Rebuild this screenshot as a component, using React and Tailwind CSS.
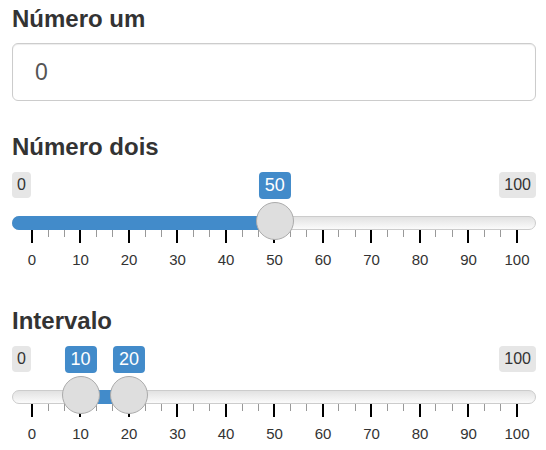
import { useState } from "react";

const TICKS = [];
for (let i = 0; i <= 30; i++) {
    TICKS.push({ v: (i * 10) / 3, major: i % 3 === 0 });
}

// value -> x inside the 524px slider box
const pos = (v) => 20 + v * 4.853;

function Slider({ title, from, to }) {
    const isRange = to !== undefined;
    const handles = isRange ? [from, to] : [from];
    const barLeft = isRange ? pos(from) : 0;
    const barRight = isRange ? pos(to) : pos(from);

    return (
        <div>
            <h2 className="text-[24px] leading-[26px] font-bold text-[#333]">{title}</h2>
            <div className="mt-[12px] w-[524px]">
                {/* Min / max + value bubbles */}
                <div className="relative flex justify-between items-start h-[27px]">
                    <span className="h-[26px] px-[5px] rounded-[4px] bg-[#e6e6e6] text-[16px] leading-[26px] text-[#333]">0</span>
                    <span className="h-[26px] px-[5px] rounded-[4px] bg-[#e6e6e6] text-[16px] leading-[26px] text-[#333]">100</span>
                    {handles.map((v) => (
                        <span
                            key={v}
                            style={{ left: pos(v) }}
                            className="absolute top-0 -translate-x-1/2 h-[27px] px-[6px] rounded-[4px] bg-[#428bca] text-[18px] leading-[27px] text-white"
                        >
                            {v}
                        </span>
                    ))}
                </div>

                {/* Track */}
                <div className="relative mt-[17px] h-[14px] rounded-full border border-[#cccccc] bg-gradient-to-b from-[#e2e2e2] to-[#fbfbfb]">
                    <div
                        style={{ left: barLeft - 1, width: barRight - barLeft }}
                        className={`absolute top-[-1px] h-[14px] bg-[#428bca] ${isRange ? "" : "rounded-l-full"}`}
                    />
                    {handles.map((v) => (
                        <div
                            key={v}
                            style={{ left: pos(v) - 20 }}
                            className="absolute top-[-15px] z-10 w-[38px] h-[38px] rounded-full border border-[#ababab] bg-[#dedede]"
                        />
                    ))}
                </div>

                {/* Grid ticks */}
                <div className="flex justify-between pl-[20px] pr-[19px] h-[13px]">
                    {TICKS.map((t) => (
                        <div key={t.v} className="w-0 flex justify-center">
                            <div className={t.major ? "shrink-0 w-[2px] h-[13px] bg-black" : "shrink-0 w-px h-[7px] bg-[#999]"} />
                        </div>
                    ))}
                </div>

                {/* Grid labels */}
                <div className="mt-[9px] flex justify-between pl-[20px] pr-[19px] h-[16px]">
                    {TICKS.filter((t) => t.major).map((t) => (
                        <div key={t.v} className="w-0 flex justify-center">
                            <span className="shrink-0 text-[15px] leading-[16px] text-[#333]">{Math.round(t.v)}</span>
                        </div>
                    ))}
                </div>
            </div>
        </div>
    );
}

export default function App() {
    const [num, setNum] = useState("0");

    return (
        <div className="w-[546px] h-[450px] bg-white pl-[12px] pt-[6px] font-['Liberation_Sans',Arial,sans-serif] overflow-hidden">
            <h2 className="text-[24px] leading-[26px] font-bold text-[#333]">Número um</h2>
            <input
                type="number"
                value={num}
                onChange={(e) => setNum(e.target.value)}
                className="mt-[11px] block w-[524px] h-[58px] pl-[22px] rounded-[6px] border border-[#cccccc] shadow-[inset_0_1px_1px_rgba(0,0,0,0.075)] text-[23px] text-[#555] outline-none"
            />

            <div className="mt-[33px]">
                <Slider title="Número dois" from={50} />
            </div>

            <div className="mt-[40px]">
                <Slider title="Intervalo" from={10} to={20} />
            </div>
        </div>
    );
}
